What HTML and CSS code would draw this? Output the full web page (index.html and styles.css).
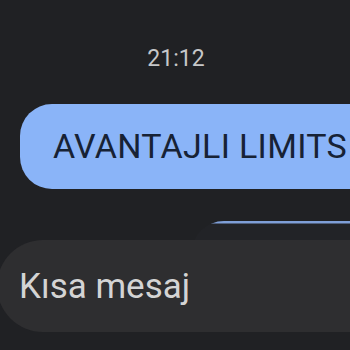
FILE: index.html
```html
<!DOCTYPE html>
<html lang="tr">
<head>
<meta charset="utf-8">
<link rel="stylesheet" href="styles.css">
</head>
<body>
<div class="screen">
  <div class="time">21:12</div>
  <div class="bubble">AVANTAJLI LIMITS</div>
  <div class="peek"><div class="bubble2"></div></div>
  <div class="compose"><span class="placeholder">Kısa mesaj</span></div>
</div>
</body>
</html>
```

FILE: styles.css
```css
html, body {
  margin: 0;
  padding: 0;
  background: #202124;
  overflow: hidden;
}
.screen {
  width: 350px;
  height: 350px;
  display: flex;
  flex-direction: column;
  font-family: Roboto, "Noto Sans", sans-serif;
  overflow: hidden;
}
.time {
  margin-top: 45px;
  height: 28px;
  line-height: 28px;
  text-align: center;
  font-size: 23px;
  color: #c6c7c9;
  padding-left: 2px;
}
.bubble {
  margin-top: 31px;
  margin-left: 20px;
  width: 420px;
  flex: none;
  height: 85px;
  box-sizing: border-box;
  border-radius: 32px;
  background: #8ab4f8;
  color: #172235;
  font-size: 34px;
  letter-spacing: 0.3px;
  line-height: 85px;
  padding-left: 33px;
  white-space: nowrap;
}
.peek {
  margin-top: 32px;
  height: 19px;
  overflow: hidden;
  flex: none;
  padding-left: 192px;
}
.bubble2 {
  width: 300px;
  height: 80px;
  border-radius: 32px;
  background: linear-gradient(180deg, #7f9fd8 0, #7f9fd8 2px, #222327 3px, #222327 100%);
}
.compose {
  margin-left: -3px;
  width: 420px;
  height: 92px;
  flex: none;
  border-radius: 46px;
  background: #2e2e30;
  display: flex;
  align-items: center;
  padding-left: 22px;
}
.placeholder {
  font-size: 35px;
  color: #d4d4d4;
  line-height: 1;
}
```
